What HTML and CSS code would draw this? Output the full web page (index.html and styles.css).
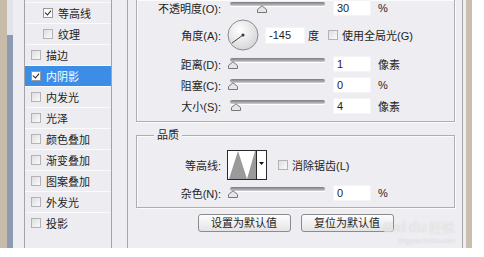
FILE: index.html
```html
<!DOCTYPE html>
<html lang="zh-CN">
<head>
    <meta charset="UTF-8">
    <title>图层样式 - 内阴影</title>
    <link rel="stylesheet" href="styles.css">
</head>
<body>
    <div class="window">
        <div class="frame-left"></div>
        <div class="scrollbar"><div class="scroll-top"></div></div>

        <div class="dialog">
            <ul class="styles-list">
                <li class="sub"><span class="check on"></span>等高线</li>
                <li class="sub"><span class="check"></span>纹理</li>
                <li><span class="check"></span>描边</li>
                <li class="active"><span class="check on"></span>内阴影</li>
                <li><span class="check"></span>内发光</li>
                <li><span class="check"></span>光泽</li>
                <li><span class="check"></span>颜色叠加</li>
                <li><span class="check"></span>渐变叠加</li>
                <li><span class="check"></span>图案叠加</li>
                <li><span class="check"></span>外发光</li>
                <li><span class="check"></span>投影</li>
            </ul>

            <div class="panel">
                <div class="group structure">
                    <div class="row first">
                        <label class="label">不透明度(O):</label>
                        <div class="slider"><div class="rail"></div><svg class="thumb" style="left: 30%" width="10" height="8" viewBox="0 0 10 8"><path d="M0.5 7.5V4.5L5 0.8L9.5 4.5V7.5Z" fill="#e6e6e6" stroke="#777"/></svg></div>
                        <input class="num" type="text" value="30">
                        <span class="unit">%</span>
                    </div>
                    <div class="row angle">
                        <label class="label">角度(A):</label>
                        <svg class="dial" width="32" height="32" viewBox="0 0 32 32">
                            <defs>
                                <radialGradient id="dialFill" cx="40%" cy="35%" r="70%">
                                    <stop offset="0" stop-color="#ffffff"/>
                                    <stop offset="1" stop-color="#d4d4d8"/>
                                </radialGradient>
                            </defs>
                            <circle cx="16" cy="16" r="15" fill="url(#dialFill)" stroke="#8d8d91"/>
                            <line x1="16" y1="16" x2="5" y2="24" stroke="#444" stroke-width="1"/>
                            <circle cx="16" cy="16" r="1.5" fill="#333"/>
                        </svg>
                        <input class="num angle-num" type="text" value="-145">
                        <span class="deg">度</span>
                        <span class="check boxed"></span>
                        <span class="check-label">使用全局光(G)</span>
                    </div>
                    <div class="row">
                        <label class="label">距离(D):</label>
                        <div class="slider"><div class="rail"></div><svg class="thumb" style="left: 0.4%" width="10" height="8" viewBox="0 0 10 8"><path d="M0.5 7.5V4.5L5 0.8L9.5 4.5V7.5Z" fill="#e6e6e6" stroke="#777"/></svg></div>
                        <input class="num" type="text" value="1">
                        <span class="unit">像素</span>
                    </div>
                    <div class="row">
                        <label class="label">阻塞(C):</label>
                        <div class="slider"><div class="rail"></div><svg class="thumb" style="left: 0%" width="10" height="8" viewBox="0 0 10 8"><path d="M0.5 7.5V4.5L5 0.8L9.5 4.5V7.5Z" fill="#e6e6e6" stroke="#777"/></svg></div>
                        <input class="num" type="text" value="0">
                        <span class="unit">%</span>
                    </div>
                    <div class="row">
                        <label class="label">大小(S):</label>
                        <div class="slider"><div class="rail"></div><svg class="thumb" style="left: 3.5%" width="10" height="8" viewBox="0 0 10 8"><path d="M0.5 7.5V4.5L5 0.8L9.5 4.5V7.5Z" fill="#e6e6e6" stroke="#777"/></svg></div>
                        <input class="num" type="text" value="4">
                        <span class="unit">像素</span>
                    </div>
                </div>

                <div class="group quality">
                    <span class="legend">品质</span>
                    <div class="row contour-row">
                        <label class="label">等高线:</label>
                        <div class="contour">
                            <svg class="contour-preview" width="28" height="28" viewBox="0 0 28 28">
                                <rect width="28" height="28" fill="#fff"/>
                                <path d="M1 28L10 0L19 28L27 0H28V28Z" fill="#9a9a9a"/>
                            </svg>
                            <span class="contour-drop"><svg width="5" height="3" viewBox="0 0 5 3"><path d="M0 0H5L2.5 3Z" fill="#111"/></svg></span>
                        </div>
                        <span class="check boxed wide"></span>
                        <span class="check-label">消除锯齿(L)</span>
                    </div>
                    <div class="row noise-row">
                        <label class="label">杂色(N):</label>
                        <div class="slider"><div class="rail"></div><svg class="thumb" style="left: 0%" width="10" height="8" viewBox="0 0 10 8"><path d="M0.5 7.5V4.5L5 0.8L9.5 4.5V7.5Z" fill="#e6e6e6" stroke="#777"/></svg></div>
                        <input class="num" type="text" value="0">
                        <span class="unit">%</span>
                    </div>
                </div>

                <div class="buttons">
                    <button type="button">设置为默认值</button>
                    <button type="button">复位为默认值</button>
                </div>

                <div class="watermark">
                    <div class="wm-line"><span class="wm-bai">Bai</span><span class="wm-du">du</span><span class="wm-cn">经验</span></div>
                    <div class="wm-url">jingyan.baidu.com</div>
                </div>
            </div>
        </div>

        <div class="frame-right"></div>
    </div>
</body>
</html>
```

FILE: styles.css
```css
/* Global */
body {
    margin: 0;
    width: 484px;
    height: 257px;
    background: #ffffff;
    font-family: "Liberation Sans", "Noto Sans CJK SC", sans-serif;
    font-size: 11px;
    color: #1e1e1e;
    overflow: hidden;
}

.window {
    display: flex;
    width: 472px;
    height: 248px;
}

.frame-left {
    width: 7px;
    background: #c7bca9;
}

.scrollbar {
    width: 6px;
    background: #8c9bb1;
}

.scroll-top {
    height: 35px;
    background: #e1e5eb;
}

.frame-right {
    width: 6px;
    background: #c8bfae;
}

.dialog {
    flex: 1;
    display: flex;
    background: #eeedf1;
    padding-left: 11px;
}

/* Styles list */
.styles-list {
    list-style: none;
    margin: 0;
    padding: 2px 0 0;
    width: 86px;
    border-left: 1px solid #a4a4a8;
    border-right: 1px solid #a4a4a8;
    background: #edecf0;
}

.styles-list li {
    display: flex;
    align-items: center;
    height: 20px;
    border-top: 1px solid #fbfbfc;
    padding-left: 6px;
    white-space: nowrap;
}

.styles-list li.sub {
    padding-left: 18px;
}

.styles-list li.active {
    background: #3b8de6;
    color: #ffffff;
}

.check {
    display: inline-block;
    box-sizing: border-box;
    width: 10px;
    height: 10px;
    border: 1px solid #b3b3b6;
    background: linear-gradient(135deg, #dedee0, #fafafa);
    margin-right: 5px;
    position: relative;
}

.check.on {
    background: #ffffff;
    border-color: #9a9a9e;
}

.check.on::after {
    content: "";
    position: absolute;
    left: 2px;
    top: 0px;
    width: 3px;
    height: 5px;
    border-right: 1.5px solid #222;
    border-bottom: 1.5px solid #222;
    transform: rotate(40deg);
}

/* Right panel */
.panel {
    position: relative;
    width: 319px;
    margin-left: 15px;
    padding: 0 7px 0 8px;
    border-left: 1px solid #a7a7ab;
    border-right: 1px solid #a7a7ab;
}

.group {
    position: relative;
    border: 1px solid #adadb2;
    box-shadow: inset 1px 1px 0 #fbfbfc, 1px 1px 0 #fbfbfc;
}

.structure {
    border-top: none;
    padding-bottom: 7px;
}

.quality {
    margin-top: 13px;
    padding: 14px 0 6px;
}

.legend {
    position: absolute;
    top: -9px;
    left: 17px;
    padding: 0 3px;
    background: #eeedf1;
    line-height: 16px;
}

.row {
    display: flex;
    align-items: center;
    height: 16px;
    margin-top: 5px;
    white-space: nowrap;
}

.row.first {
    height: 15px;
    margin-top: 0;
}

.row.angle {
    height: 32px;
    margin-top: 4px;
}

.structure .row.angle + .row {
    margin-top: 5px;
}

.label {
    width: 84px;
    text-align: right;
}

.slider {
    position: relative;
    width: 95px;
    height: 12px;
    margin-left: 9px;
}

.rail {
    height: 4px;
    border-radius: 2px;
    background: linear-gradient(#7c7c80, #a9a9ad 60%, #d2d2d6);
    box-shadow: 0 1px 0 #ffffff;
}

.thumb {
    position: absolute;
    top: 3px;
    margin-left: -2px;
}

.num {
    box-sizing: border-box;
    width: 38px;
    height: 16px;
    margin: 0 0 0 8px;
    padding: 0 0 0 3px;
    border: 1px solid #f4f4f6;
    background: #ffffff;
    font-family: inherit;
    font-size: 11px;
    color: #1e1e1e;
    outline: none;
}

.unit {
    margin-left: 7px;
}

.dial {
    margin-left: 6px;
}

.num.angle-num {
    width: 40px;
    height: 17px;
    margin-left: 6px;
}

.deg {
    margin-left: 3px;
}

.check.boxed {
    margin: 0 4px 0 9px;
}

.check.boxed.wide {
    margin-left: 11px;
}

.check-label {
    font-size: 11px;
}

/* Contour picker */
.contour-row {
    height: 30px;
    margin-top: 0;
}

.label + .contour {
    margin-left: 6px;
}

.contour {
    display: flex;
    box-sizing: border-box;
    width: 40px;
    height: 30px;
    border: 1px solid #2a2a2a;
    background: #ffffff;
}

.contour-preview {
    display: block;
    border-right: 1px solid #2a2a2a;
}

.contour-drop {
    flex: 1;
    display: flex;
    justify-content: center;
    padding-top: 11px;
}

.contour-drop svg {
    display: block;
}

/* Buttons */
.buttons {
    display: flex;
    justify-content: center;
    gap: 10px;
    margin-top: 6px;
}

button {
    width: 93px;
    height: 18px;
    padding: 0;
    border: 1px solid #8b8b8f;
    border-radius: 3px;
    background: linear-gradient(#fdfdfd, #e4e4e6);
    font-family: inherit;
    font-size: 11px;
    color: #1e1e1e;
    line-height: 16px;
}

/* Baidu watermark */
.watermark {
    position: absolute;
    right: 7px;
    bottom: 3px;
    width: 72px;
    text-align: right;
    color: rgba(255, 255, 255, 0.6);
    text-shadow: 0 0 1px rgba(140, 140, 140, 0.4);
    pointer-events: none;
}

.wm-line {
    height: 20px;
    line-height: 20px;
}

.wm-bai,
.wm-du {
    font-family: "Liberation Sans", sans-serif;
    font-size: 15px;
    font-weight: bold;
}

.wm-du {
    margin: 0 2px;
}

.wm-cn {
    font-size: 13px;
}

.wm-url {
    font-size: 7px;
    line-height: 8px;
}
```
